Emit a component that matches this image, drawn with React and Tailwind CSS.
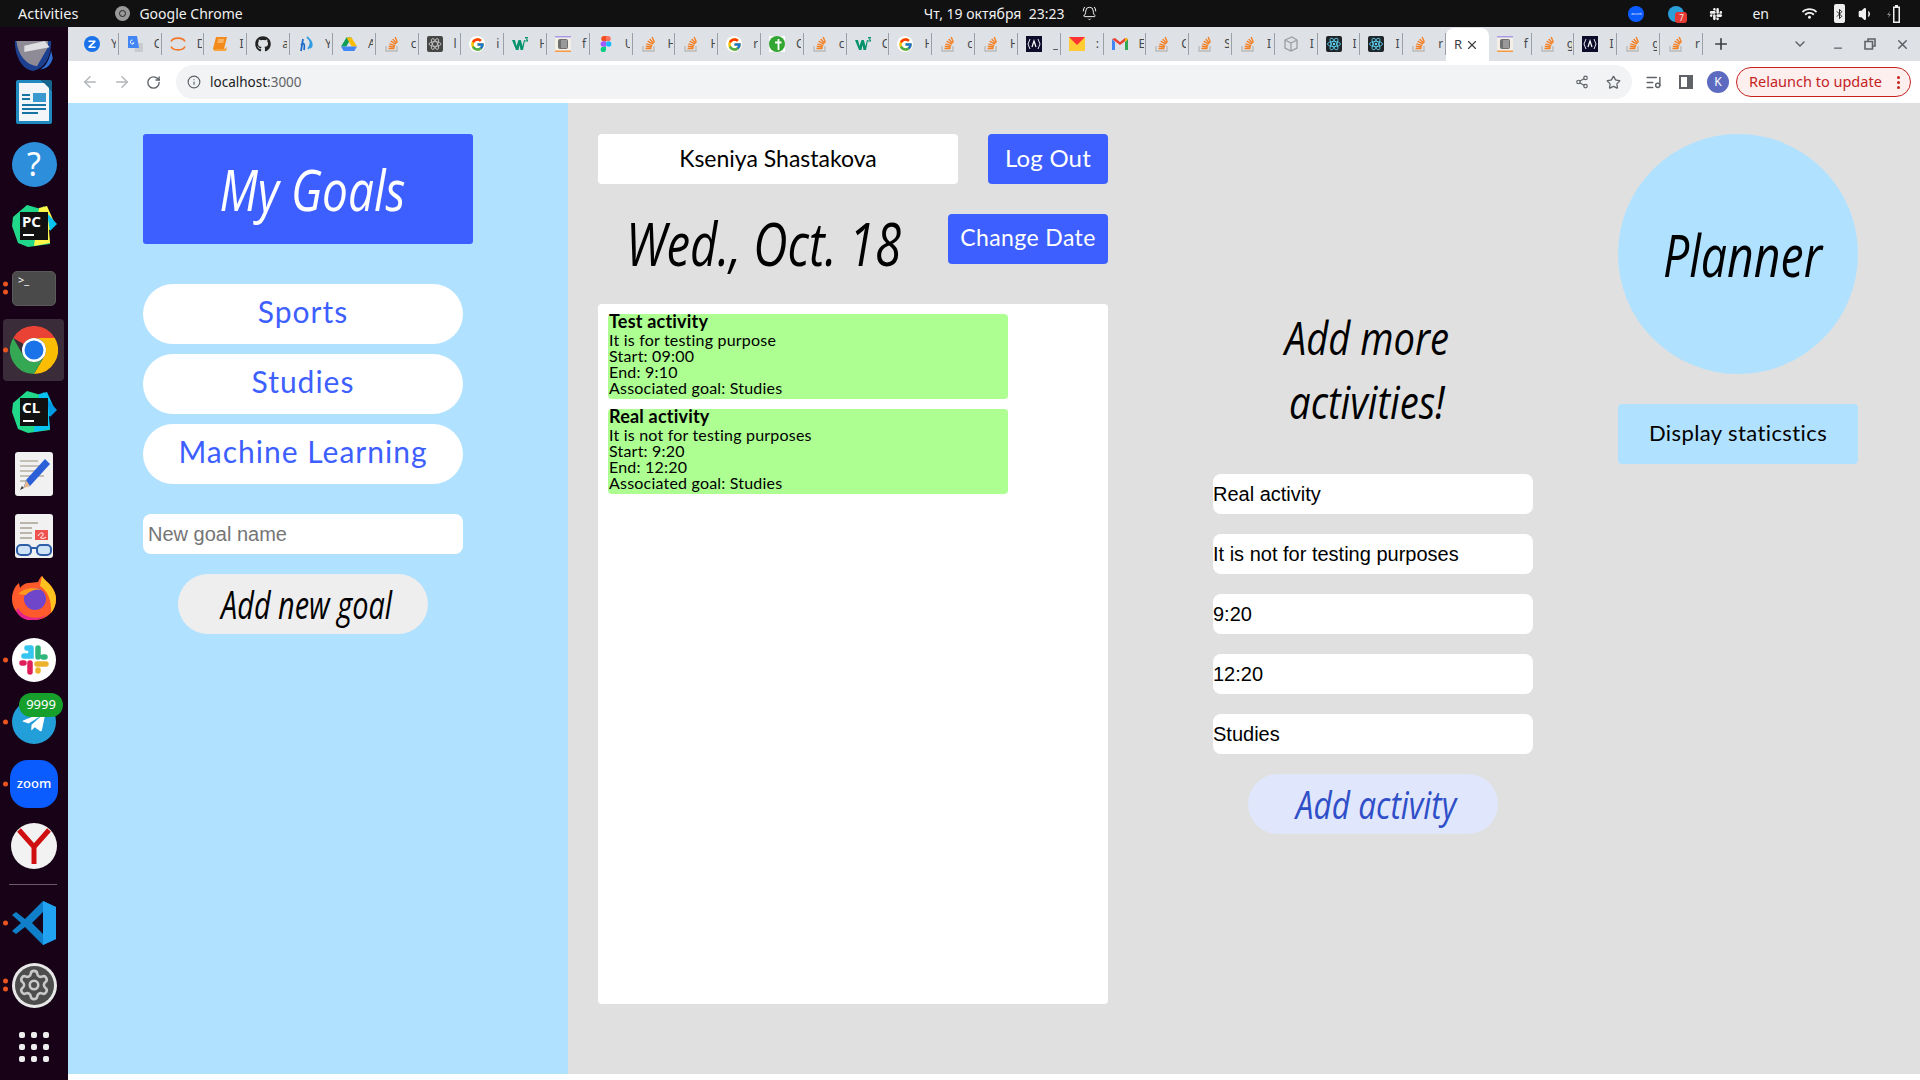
import {
  ArrowLeft,
  ArrowRight,
  RotateCw,
  Info,
  Share2,
  Star,
  ListMusic,
  X,
  Plus,
  ChevronDown,
  Minus,
  Settings,
  Bluetooth,
  Volume1,
  BellRing,
} from "lucide-react";
import { FaGithub, FaSlack, FaTelegramPlane, FaWifi } from "react-icons/fa";
import { FcGoogle } from "react-icons/fc";

// no Josefin Sans or handwriting font on this box, closest installed ones
const josefin = "font-[family-name:Lato,sans-serif]";
const script = "font-[family-name:'Open_Sans',sans-serif] italic font-normal";
const arial = "font-[family-name:'Liberation_Sans',Arial,sans-serif]";
const ui = "font-[family-name:'Noto_Sans',sans-serif]";

const tabs = [
  ["z", "Y"], ["translate", "C"], ["arcs", "D"], ["book", "I"], ["github", "a"],
  ["flame", "Y"], ["drive", "A"], ["so", "c"], ["atom", "l"], ["google", "i"],
  ["w3", "H"], ["gbook", "f"], ["figma", "U"], ["so", "H"], ["so", "H"],
  ["google", "r"], ["fgreen", "C"], ["so", "c"], ["w3", "C"], ["google", "H"],
  ["so", "c"], ["so", "H"], ["dark", "_"], ["ymail", ":"], ["gmail", "E"],
  ["so", "C"], ["so", "S"], ["so", "I"], ["cube", "I"], ["react", "I"],
  ["react", "I"], ["so", "r"], ["active", "R"], ["gbook", "f"], ["so", "g"],
  ["dark", "I"], ["so", "g"], ["so", "r"],
];

function Favicon({ type }) {
  switch (type) {
    case "z":
      return (
        <svg viewBox="0 0 16 16" className="w-4 h-4">
          <circle cx="8" cy="8" r="8" fill="#1a73e8" />
          <path d="M4.5 4.5h7v1.6l-4.6 4.3h4.6v1.6h-7v-1.6l4.6-4.3H4.5z" fill="#fff" />
        </svg>
      );
    case "translate":
      return (
        <svg viewBox="0 0 16 16" className="w-4 h-4">
          <path d="M7 7h9v9H8z" fill="#c9cccf" />
          <path d="M1 0h9l2 12H1z" fill="#4285f4" />
          <path d="M5.5 4a2 2 0 1 0 1.6 3H5.6" fill="none" stroke="#fff" />
        </svg>
      );
    case "arcs":
      return (
        <svg viewBox="0 0 16 16" className="w-4 h-4" fill="none" stroke="#f37626" strokeWidth="1.6">
          <path d="M1 5.5C3 1 13 1 15 5.5" />
          <path d="M1 10.5C3 15 13 15 15 10.5" />
        </svg>
      );
    case "book":
      return (
        <svg viewBox="0 0 16 16" className="w-4 h-4">
          <path d="M4 1h11l-3 12H1z" fill="#f28b1c" />
          <path d="M1 13h11l3-2-1 4H2z" fill="#f8a23c" />
          <path d="M6 4h6M5.5 6h6" stroke="#ffd9a6" />
        </svg>
      );
    case "github":
      return <FaGithub className="w-4 h-4 text-[#222]" />;
    case "flame":
      return (
        <svg viewBox="0 0 16 16" className="w-4 h-4" fill="none" stroke="#1769c9" strokeWidth="1.7">
          <path d="M5 3 3 15M3 9c3-3 4-1 3 5" />
          <path d="M9 1c4 3 5 7 1 12M12 4c2 3 3 6 0 8" stroke="#2f9be0" />
        </svg>
      );
    case "drive":
      return (
        <svg viewBox="0 0 16 16" className="w-4 h-4">
          <path d="M5.5 1.5h5L5.3 10.5H0z" fill="#0f9d58" />
          <path d="M10.5 1.5 16 10.5h-5.3L5.5 1.5z" fill="#fbbc04" />
          <path d="M2.7 15 0 10.5h16L13.3 15z" fill="#4285f4" />
        </svg>
      );
    case "so":
      return (
        <svg viewBox="0 0 16 16" className="w-4 h-4" fill="none">
          <path d="M2 10v5h11v-5" stroke="#bcbbbb" strokeWidth="1.4" />
          <path d="M4.5 12.5h6M4.8 10.2l6 .8M5.4 7.8l5.8 1.8M6.7 5.2l5.2 3M8.7 3l4 4.4M11.2 1l2.2 5.4" stroke="#f48024" strokeWidth="1.4" />
        </svg>
      );
    case "atom":
      return (
        <svg viewBox="0 0 16 16" className="w-4 h-4">
          <rect width="16" height="16" rx="2" fill="#474747" />
          <g fill="none" stroke="#cfcfcf" strokeWidth=".8">
            <ellipse cx="8" cy="8" rx="6" ry="2.4" />
            <ellipse cx="8" cy="8" rx="6" ry="2.4" transform="rotate(60 8 8)" />
            <ellipse cx="8" cy="8" rx="6" ry="2.4" transform="rotate(120 8 8)" />
          </g>
        </svg>
      );
    case "react":
      return (
        <svg viewBox="0 0 16 16" className="w-4 h-4">
          <rect width="16" height="16" rx="2" fill="#1f2428" />
          <g fill="none" stroke="#61dafb" strokeWidth=".8">
            <ellipse cx="8" cy="8" rx="6.5" ry="2.6" />
            <ellipse cx="8" cy="8" rx="6.5" ry="2.6" transform="rotate(60 8 8)" />
            <ellipse cx="8" cy="8" rx="6.5" ry="2.6" transform="rotate(120 8 8)" />
          </g>
          <circle cx="8" cy="8" r="1.2" fill="#61dafb" />
        </svg>
      );
    case "google":
      return (
        <span className="w-4 h-4 rounded-full bg-white flex items-center justify-center">
          <FcGoogle className="w-[15px] h-[15px]" />
        </span>
      );
    case "w3":
      return (
        <svg viewBox="0 0 16 16" className="w-4 h-4">
          <path d="M0 4h3l1.5 6L6.500 4h2.300l1.700 6L12 4h1l-2 10H8.500L7.600 9 6.500 14H4z" fill="#04936c" />
          <path d="M13 1h3v1l-1 1 1 1v1.500h-3v-1h2L14 3.500l1-1h-2z" fill="#04936c" />
        </svg>
      );
    case "gbook":
      return (
        <svg viewBox="0 0 16 16" className="w-4 h-4">
          <rect width="16" height="16" fill="#f3efe6" />
          <rect y="0" width="16" height="1.500" fill="#a99be8" />
          <rect y="14.500" width="16" height="1.500" fill="#f59a45" />
          <rect x="3" y="3" width="10" height="10" rx="2" fill="#6f6f6f" />
          <path d="M6 5h6M6 7h6M6 9h6M6 11h6" stroke="#d9d9d9" strokeWidth=".8" />
        </svg>
      );
    case "figma":
      return (
        <svg viewBox="0 0 16 16" className="w-4 h-4">
          <path d="M8 0H5.300a2.700 2.700 0 0 0 0 5.300H8z" fill="#f24e1e" />
          <path d="M8 0h2.700a2.700 2.700 0 0 1 0 5.300H8z" fill="#ff7262" />
          <path d="M8 5.300H5.300a2.700 2.700 0 0 0 0 5.400H8z" fill="#a259ff" />
          <circle cx="10.700" cy="8" r="2.700" fill="#1abcfe" />
          <path d="M5.300 10.700H8v2.600a2.700 2.700 0 1 1-2.700-2.600z" fill="#0acf83" />
        </svg>
      );
    case "fgreen":
      return (
        <svg viewBox="0 0 16 16" className="w-4 h-4">
          <rect width="16" height="16" fill="#fff" />
          <circle cx="8" cy="8" r="8" fill="#33a532" />
          <path d="M9.500 3v11M6 6.500h6.500" stroke="#fff" strokeWidth="1.800" />
        </svg>
      );
    case "dark":
      return (
        <svg viewBox="0 0 16 16" className="w-4 h-4">
          <rect width="16" height="16" fill="#0d0d2b" />
          <path d="M4 3 2 8l2 5M12 3l2 5-2 5" stroke="#e8e8f0" fill="none" />
          <path d="M6 11l2-6 2 6" stroke="#fff" fill="none" strokeWidth="1.200" />
        </svg>
      );
    case "ymail":
      return (
        <svg viewBox="0 0 16 16" className="w-4 h-4">
          <rect y="1" width="16" height="14" fill="#ffcc33" />
          <path d="M0 1h16L8 9z" fill="#f33" />
        </svg>
      );
    case "gmail":
      return (
        <svg viewBox="0 0 16 16" className="w-4 h-4">
          <path d="M0 3v11h3V6z" fill="#4285f4" />
          <path d="M16 3v11h-3V6z" fill="#34a853" />
          <path d="M0 3l3-1 5 4 5-4 3 1-8 6z" fill="#ea4335" />
          <path d="M13 2l3 1-3 3z" fill="#fbbc04" />
        </svg>
      );
    case "cube":
      return (
        <svg viewBox="0 0 16 16" className="w-4 h-4" fill="none" stroke="#9a9da1" strokeWidth="1.300">
          <path d="M2 4l7-3 5 3v8l-6 3-6-3zM2 4l6 3 6-3M8 7v8" />
        </svg>
      );
    default:
      return null;
  }
}

function TabStrip() {
  return (
    <div className="h-[34px] bg-[#dee1e6] flex items-center pl-2 shrink-0">
      {tabs.map(([type, letter], i) =>
        type === "active" ? (
          <div key={i} className="w-[42.82px] h-[34px] mt-[1px] bg-white rounded-t-lg flex items-center pl-2 text-[#3c4043]">
            <span className={`${ui} text-[13px] w-[11px]`}>{letter}</span>
            <X size={14} strokeWidth={2} />
          </div>
        ) : (
          <div key={i} className="w-[42.82px] h-[22px] flex items-center pl-2 border-r border-[#9aa0a6] overflow-hidden">
            <Favicon type={type} />
            <span className={`${ui} ml-[11px] text-[12px] text-[#45494d] w-[5px] overflow-hidden`}>{letter}</span>
          </div>
        )
      )}
      <Plus size={18} strokeWidth={2.2} className="ml-[9px] text-[#3c4043]" />
      <ChevronDown size={16} strokeWidth={2.2} className="ml-[62px] text-[#5f6368]" />
      <Minus size={12} strokeWidth={2.5} className="ml-[24px] mt-[8px] text-[#5f6368]" />
      <svg viewBox="0 0 12 12" className="w-3 h-3 ml-[20px] text-[#5f6368]" fill="none" stroke="currentColor" strokeWidth="1.600">
        <path d="M4 3V1h7v7H9M1 3.500h7.500V11H1z" />
      </svg>
      <X size={15} strokeWidth={2.4} className="ml-[19px] text-[#5f6368]" />
    </div>
  );
}

function Toolbar() {
  return (
    <div className="h-[42px] bg-white flex items-center shrink-0 text-[#5f6368]">
      <ArrowLeft size={18} strokeWidth={2} className="ml-[13px] text-[#b3b6ba]" />
      <ArrowRight size={18} strokeWidth={2} className="ml-[14px] text-[#b3b6ba]" />
      <RotateCw size={15} strokeWidth={2.2} className="ml-[15px]" />
      <div className="ml-[15px] w-[1456px] h-[34px] rounded-full bg-[#f1f3f4] flex items-center pl-[11px] pr-[11px]">
        <Info size={14} strokeWidth={2} />
        <span className={`${ui} ml-[9px] text-[13.5px] text-[#202124]`}>
          localhost<span className="text-[#5f6368]">:3000</span>
        </span>
        <Share2 size={14} strokeWidth={2} className="ml-auto" />
        <Star size={15} strokeWidth={2} className="ml-[17px]" />
      </div>
      <ListMusic size={17} strokeWidth={2} className="ml-[13px]" />
      <svg viewBox="0 0 14 14" className="w-[14px] h-[14px] ml-[17px]">
        <path d="M0 0h14v14H0z" fill="#5f6368" />
        <path d="M2 2h6v10H2z" fill="#fff" />
      </svg>
      <div className={`${ui} ml-[14px] w-[22px] h-[22px] rounded-full bg-[#5c6bc0] text-white text-[12px] flex items-center justify-center`}>K</div>
      <div className={`${ui} ml-[7px] w-[175px] h-[30px] rounded-full border border-[#c5221f] bg-[#fcefee] text-[#c5221f] text-[14.5px] flex items-center pl-[12px]`}>
        Relaunch to update
        <span className="ml-auto mr-[10px] flex flex-col gap-[2px]">
          <span className="w-[3px] h-[3px] rounded-full bg-[#c5221f]" />
          <span className="w-[3px] h-[3px] rounded-full bg-[#c5221f]" />
          <span className="w-[3px] h-[3px] rounded-full bg-[#c5221f]" />
        </span>
      </div>
    </div>
  );
}

function TopBar() {
  return (
    <div className={`${ui} h-[27px] bg-[#111] text-[#f0f0f0] text-[14.500px] flex items-center shrink-0`}>
      <span className="ml-[18px]">Activities</span>
      <span className="ml-[37px] w-[15px] h-[15px] rounded-full bg-[#9a9a9a] flex items-center justify-center">
        <span className="w-[7px] h-[7px] rounded-full border border-[#222]" />
      </span>
      <span className="ml-[9px] text-[14px]">Google Chrome</span>
      <span className="ml-[681px] text-[14px] whitespace-pre">Чт, 19 октября  23:23</span>
      <BellRing size={15} strokeWidth={1.6} className="ml-[18px]" />
      <span className="ml-[531px] w-[16px] h-[16px] rounded-full bg-[#0b5cff] flex items-center justify-center text-[4px]">zoom</span>
      <span className="ml-[24px] relative w-[16px] h-[16px] rounded-full bg-[#2a9fd8]">
        <span className="absolute -right-[3px] -bottom-[1px] w-[12px] h-[11px] rounded-[3px] bg-[#e53935] text-[8px] leading-[11px] text-center">7</span>
      </span>
      <FaSlack size={14} className="ml-[25px]" />
      <span className="ml-[29px] w-[20px] text-[14px]">en</span>
      <FaWifi size={15} className="ml-[30px]" />
      <span className="ml-[17px] w-[11px] h-[19px] bg-[#eee] rounded-[2px] flex items-center justify-center">
        <Bluetooth size={12} strokeWidth={2} className="text-[#111]" />
      </span>
      <Volume1 size={16} fill="#f0f0f0" className="ml-[13px]" />
      <svg viewBox="0 0 16 18" className="w-[16px] h-[18px] ml-[11px]" fill="#f0f0f0">
        <path d="M5 6 2 10h2l-1 3 3-4H4z" fill="#888" />
        <path d="M10 0h3v1.500h2V18H8V1.500h2zM9.500 3v13.500h4V3z" />
      </svg>
    </div>
  );
}

function Dots({ count }) {
  return (
    <span className="absolute left-[3px] top-1/2 -translate-y-1/2 flex flex-col gap-[3px]">
      {Array.from({ length: count }).map((_, i) => (
        <span key={i} className="w-[5px] h-[5px] rounded-full bg-[#e95420]" />
      ))}
    </span>
  );
}

function DockItem({ dots, highlight, children }) {
  return (
    <div className="relative h-[62px] shrink-0 flex items-center justify-center">
      {highlight && <div className="absolute left-[3px] right-[4px] inset-y-0 rounded-[4px] bg-[#3a2c38]" />}
      {dots ? <Dots count={dots} /> : null}
      <div className="relative flex items-center justify-center">{children}</div>
    </div>
  );
}

function JetBrains({ label, colors }) {
  return (
    <div className="relative w-[46px] h-[46px]">
      <svg viewBox="0 0 46 46" className="w-[46px] h-[46px]">
        <path d="M2 14 16 2l14 4 3-3 3 13 8 6-7 6 2 13-22 3-10-4-6-17z" fill={colors[0]} />
        <path d="M28 5 36 3l8 18-6 6 1 13-16 3z" fill={colors[1]} />
        <path d="M36 10l10 11-7 7z" fill={colors[2]} />
        <rect x="9" y="9" width="28" height="28" fill="#111" />
      </svg>
      <span className={`${ui} absolute left-[11px] top-[9px] text-white text-[15px] leading-[19px] font-bold`}>{label}</span>
      <span className="absolute left-[12px] top-[31px] w-[11px] h-[2px] bg-white" />
    </div>
  );
}

function Dock() {
  return (
    <div className="w-[68px] shrink-0 bg-[#170218] flex flex-col overflow-hidden">
      <div className="mt-[5px] h-[39px] overflow-hidden flex justify-center pr-[2px] items-end shrink-0">
        <svg viewBox="0 0 50 38" className="w-[50px] h-[30px]">
          <path d="M2 0h46c0 18-6 34-23 38C10 36 2 18 2 0z" fill="#1d3f8f" />
          <path d="M4 0l40 0 0 8L30 32C16 30 6 18 4 0z" fill="#8e8b96" />
          <path d="M14 6l26-6 6 8-32 6z" fill="#dedde2" />
          <path d="M34 36c8-4 12-14 14-24l2 10c-2 8-8 14-16 14z" fill="#2f6fd6" />
        </svg>
      </div>
      <DockItem>
        <svg viewBox="0 0 36 44" className="w-[36px] h-[44px]">
          <path d="M2 0h23l11 11v31a2 2 0 0 1-2 2H2a2 2 0 0 1-2-2V2a2 2 0 0 1 2-2z" fill="#1f8ac0" />
          <rect x="3" y="3" width="30" height="38" fill="#f2f6f9" />
          <path d="M25 0h9a2 2 0 0 1 2 2v9z" fill="#14668f" />
          <rect x="17" y="13" width="13" height="9" fill="#3a9ad0" />
          <path d="M6 15h8M6 19h8M6 25h24M6 29h24M6 33h16" stroke="#1673a4" strokeWidth="2" />
        </svg>
      </DockItem>
      <DockItem>
        <div className={`${ui} w-[45px] h-[45px] rounded-full bg-[#2d8fdc] flex items-center justify-center text-white text-[32px] font-normal`}>?</div>
      </DockItem>
      <DockItem>
        <JetBrains label="PC" colors={["#21d789", "#fcf84a", "#07c3f2"]} />
      </DockItem>
      <DockItem dots={2}>
        <div className={`${ui} w-[44px] h-[35px] rounded-[5px] bg-[#4a4a4a] border border-[#5a5a5a] text-white text-[11px] leading-[14px] pl-[5px] pt-[1px]`}>&gt;_</div>
      </DockItem>
      <DockItem dots={1} highlight>
        <svg viewBox="0 0 48 48" className="w-[48px] h-[48px]">
          <path d="M3.200 12A24 24 0 0 1 44.800 12H24A12 12 0 0 0 13.600 18z" fill="#ea4335" />
          <path d="M44.800 12A24 24 0 0 1 24 48L34.400 30A12 12 0 0 0 24 12z" fill="#fbbc04" />
          <path d="M3.200 12 13.600 30A12 12 0 0 0 34.400 30L24 48A24 24 0 0 1 3.200 12z" fill="#34a853" />
          <circle cx="24" cy="24" r="12" fill="#fff" />
          <circle cx="24" cy="24" r="9.500" fill="#1a73e8" />
        </svg>
      </DockItem>
      <DockItem>
        <JetBrains label="CL" colors={["#21d789", "#07c3f2", "#009ae5"]} />
      </DockItem>
      <DockItem>
        <svg viewBox="0 0 38 44" className="w-[38px] h-[44px]">
          <rect width="38" height="44" rx="3" fill="#f1f1f1" />
          <path d="M5 9h18M5 14h24M5 19h18M5 24h24M5 29h12" stroke="#c4c0b6" strokeWidth="2" />
          <path d="M30 7l5 5-20 22-6 1 2-7z" fill="#2a5fd8" />
          <path d="M11 28l4 6-6 2z" fill="#e8b98a" />
          <path d="M5 38l4-2-2-2z" fill="#333" />
        </svg>
      </DockItem>
      <DockItem>
        <svg viewBox="0 0 38 44" className="w-[38px] h-[44px]">
          <rect width="38" height="44" rx="3" fill="#f1f1f1" />
          <path d="M5 9h18M5 14h12M5 19h12M5 24h12" stroke="#b9b5aa" strokeWidth="2" />
          <rect x="20" y="16" width="13" height="10" fill="#ef5350" />
          <path d="M23 22c2-4 6-4 5-1s-4 2-2 3 4 0 5-1" stroke="#fff" fill="none" />
          <g fill="#cfe3f7" stroke="#2f5fa8" strokeWidth="2">
            <rect x="2" y="31" width="14" height="10" rx="4" />
            <rect x="22" y="31" width="14" height="10" rx="4" />
          </g>
          <path d="M16 34h6" stroke="#2f5fa8" strokeWidth="2" />
        </svg>
      </DockItem>
      <DockItem>
        <svg viewBox="0 0 44 44" className="w-[44px] h-[44px]">
          <path d="M22 44C9 44 0 34 0 23 0 16 3 10 7 7l1 5c2-3 5-5 9-5l9-1c1-2 2-5 4-6 2 4 6 6 9 10 3 4 5 8 5 13 0 12-9 21-22 21z" fill="#ff5a2b" />
          <path d="M30 0c2 4 6 6 9 10 3 4 5 8 5 13 0 6-2 10-5 14 1-12-3-22-11-27z" fill="#ffc21f" />
          <path d="M6 32c4 9 18 13 28 7 -8 8-24 8-30-4z" fill="#e5238d" />
          <circle cx="23" cy="23" r="11" fill="#6f46c9" />
          <path d="M6 18c6-6 16-8 24-4-8-1-12 1-16 5z" fill="#ff9a1f" />
        </svg>
      </DockItem>
      <DockItem dots={1}>
        <div className="w-[44px] h-[44px] rounded-full bg-white flex items-center justify-center">
          <svg viewBox="0 0 30 30" className="w-[30px] h-[30px]">
            <g strokeWidth="5.500" strokeLinecap="round">
              <path d="M11 3v0h-3M12 3v8H5" stroke="#36c5f0" fill="none" />
              <path d="M19 3v9M26 12h-2" stroke="#2eb67d" fill="none" />
              <path d="M27 19h-9M19 26v-1" stroke="#ecb22e" fill="none" />
              <path d="M11 27v-9M3 18h2" stroke="#e01e5a" fill="none" />
            </g>
          </svg>
        </div>
      </DockItem>
      <DockItem dots={1}>
        <div className="w-[44px] h-[44px] rounded-full bg-[#229ed9] flex items-center justify-center">
          <FaTelegramPlane size={26} className="text-white" />
        </div>
        <div className={`${ui} absolute -top-[7px] -right-[7px] w-[44px] h-[24px] rounded-full bg-[#16a02b] text-white text-[13px] flex items-center justify-center`}>9999</div>
      </DockItem>
      <DockItem dots={1}>
        <div className={`${ui} w-[48px] h-[48px] rounded-[18px] bg-[#0b5cff] text-white text-[13px] font-medium flex items-center justify-center`}>zoom</div>
      </DockItem>
      <DockItem>
        <div className="w-[46px] h-[46px] rounded-full bg-[#f2f2f2] flex items-center justify-center">
          <svg viewBox="0 0 40 40" className="w-[40px] h-[40px]" fill="none" stroke="#d01010" strokeWidth="5">
            <path d="M5 4l15 17L35 4M20 21v17" />
          </svg>
        </div>
      </DockItem>
      <div className="h-[15px] flex items-center justify-center pr-[2px] shrink-0">
        <div className="w-[48px] h-px bg-[#6b5a6b]" />
      </div>
      <DockItem dots={1}>
        <svg viewBox="0 0 44 44" className="w-[44px] h-[44px]">
          <path d="M31 0l13 6v32l-13 6L13 26 4 33 0 30l9-8-9-8 4-3 9 7z" fill="#0f7fc9" />
          <path d="M31 0l13 6v32l-13 6z" fill="#22a3f1" />
          <path d="M31 11 20 22l11 11z" fill="#170218" />
        </svg>
      </DockItem>
      <DockItem dots={2}>
        <div className="w-[45px] h-[45px] rounded-full bg-[#e8e8e8] flex items-center justify-center">
          <div className="w-[39px] h-[39px] rounded-full bg-[#4d4d4d] flex items-center justify-center">
            <Settings size={34} strokeWidth={1.8} className="text-[#c9c9c9]" />
          </div>
        </div>
      </DockItem>
      <div className="h-[62px] shrink-0 flex items-center justify-center">
        <div className="grid grid-cols-3 gap-x-[6px] gap-y-[6px]">
          {Array.from({ length: 9 }).map((_, i) => (
            <span key={i} className="w-[6px] h-[6px] rounded-[2px] bg-[#eee]" />
          ))}
        </div>
      </div>
    </div>
  );
}

function ActivityCard({ title, description, start, end, goal }) {
  return (
    <div className={`${josefin} w-[400px] h-[85px] flex flex-col bg-[#adff92] rounded-[4px] pl-[1px] text-[16px] leading-[16px] tracking-[.2px] text-black`}>
      <div className="-mt-[3px] font-bold text-[18px] leading-[21px]">{title}</div>
      <div>{description}</div>
      <div>Start: {start}</div>
      <div>End: {end}</div>
      <div>Associated goal: {goal}</div>
    </div>
  );
}

const inputValues = ["Real activity", "It is not for testing purposes", "9:20", "12:20", "Studies"];

function Planner() {
  return (
    <div className="flex-1 flex bg-[#e0e0e0] min-h-0 mb-[6px]">
      <aside className="w-[500px] shrink-0 bg-[#b0e1ff] pl-[75px] pt-[31px]">
        <div className={`${script} w-[330px] h-[110px] bg-[#3d5fff] rounded-[3px] text-white text-[56px] flex items-center justify-center`}>
          <span className="ml-[8px] scale-x-[.82]">My Goals</span>
        </div>
        <div className="mt-[40px] w-[320px] flex flex-col gap-[10px]">
          {["Sports", "Studies", "Machine Learning"].map((goal) => (
            <button key={goal} className={`${josefin} h-[60px] pb-[5px] rounded-full bg-white text-[#3d5fff] text-[30px] tracking-[1px]`}>{goal}</button>
          ))}
        </div>
        <input
          placeholder="New goal name"
          className={`${arial} mt-[30px] block w-[320px] h-[40px] rounded-[8px] bg-white pl-[5px] text-[20px] text-black placeholder:text-[#757575] outline-none`}
        />
        <button className={`${script} block mt-[20px] ml-[35px] w-[250px] h-[60px] rounded-full bg-[#eeeeee] text-black text-[38px]`}>
          <span className="inline-block ml-[8px] scale-x-[.76]">Add new goal</span>
        </button>
      </aside>

      <section className="w-[510px] ml-[30px] shrink-0 pt-[31px]">
        <div className="flex justify-between">
          <div className={`${josefin} w-[360px] h-[50px] pb-[2px] bg-white rounded-[4px] text-black text-[23px] flex items-center justify-center`}>Kseniya Shastakova</div>
          <button className={`${josefin} w-[120px] h-[50px] pb-[2px] bg-[#3d5fff] rounded-[4px] text-white text-[24px] tracking-[.2px]`}>Log Out</button>
        </div>
        <div className="mt-[30px] h-[50px] flex justify-between">
          <h1 className={`${script} ml-[28px] h-[50px] pt-[4px] w-[275px] origin-left scale-x-[.79] whitespace-nowrap text-[60px] text-black leading-[50px]`}>Wed., Oct. 18</h1>
          <button className={`${josefin} w-[160px] h-[50px] pb-[3px] bg-[#3d5fff] rounded-[4px] text-white text-[23px] tracking-[.4px]`}>Change Date</button>
        </div>
        <div className="mt-[40px] h-[700px] bg-white rounded-[4px] p-[10px] flex flex-col gap-[10px]">
          <ActivityCard title="Test activity" description="It is for testing purpose" start="09:00" end="9:10" goal="Studies" />
          <ActivityCard title="Real activity" description="It is not for testing purposes" start="9:20" end="12:20" goal="Studies" />
        </div>
      </section>

      <section className="w-[320px] ml-[105px] shrink-0 pt-[202px]">
        <h2 className={`${script} w-[308px] scale-x-[.83] text-center text-[46px] leading-[64px] text-black px-[40px]`}>Add more activities!</h2>
        <div className="mt-[41px] flex flex-col gap-[20px]">
          {inputValues.map((value) => (
            <input
              key={value}
              readOnly
              value={value}
              className={`${arial} block w-[320px] h-[40px] rounded-[8px] bg-white text-[20px] text-black outline-none`}
            />
          ))}
        </div>
        <button className={`${script} block mt-[20px] ml-[35px] w-[250px] h-[60px] rounded-full bg-[#e0e6fb] text-[#2f4fc9] text-[39px]`}>
          <span className="inline-block ml-[6px] scale-x-[.81]">Add activity</span>
        </button>
      </section>

      <section className="w-[240px] ml-[85px] shrink-0 pt-[31px]">
        <div className={`${script} w-[240px] h-[240px] rounded-full bg-[#b0e1ff] text-black text-[58px] flex items-center justify-center`}>
          <span className="ml-[8px] scale-x-[.8]">Planner</span>
        </div>
        <button className={`${josefin} mt-[30px] pb-[4px] w-[240px] h-[60px] bg-[#b0e1ff] rounded-[4px] text-black text-[22px] tracking-[.4px]`}>Display staticstics</button>
      </section>
    </div>
  );
}

export default function App() {
  return (
    <div className="w-[1920px] h-[1080px] flex flex-col overflow-hidden bg-white">
      <TopBar />
      <div className="flex-1 flex min-h-0">
        <Dock />
        <div className="flex-1 flex flex-col min-w-0">
          <TabStrip />
          <Toolbar />
          <Planner />
        </div>
      </div>
    </div>
  );
}
